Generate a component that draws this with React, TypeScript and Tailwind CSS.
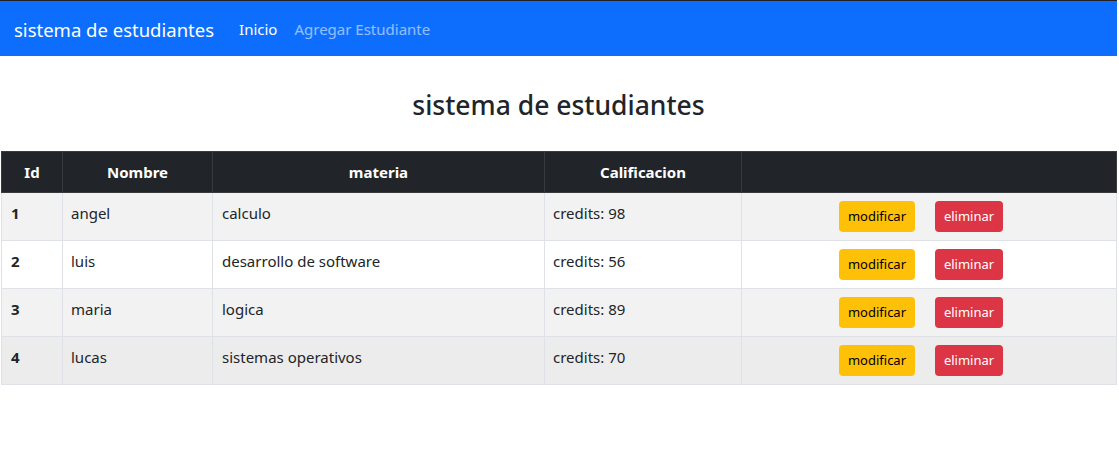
import React from "react";

const rows = [
  { id: 1, nombre: "angel", materia: "calculo", cred: 98 },
  { id: 2, nombre: "luis", materia: "desarrollo de software", cred: 56 },
  { id: 3, nombre: "maria", materia: "logica", cred: 89 },
  { id: 4, nombre: "lucas", materia: "sistemas operativos", cred: 70 },
];

const rowBg = ["bg-[#f2f2f2]", "bg-white", "bg-[#f2f2f2]", "bg-[#ececec]"];

export default function App() {
  return (
    <div
      className="w-[1117px] min-h-[468px] bg-white text-[#212529]"
      style={{ fontFamily: '"Noto Sans", "Open Sans", sans-serif' }}
    >
      <nav className="h-[56px] bg-[#0d6efd] border-t border-[#222] flex items-center pl-[14px] pt-[2px]">
        <span className="text-[18.5px] text-white mr-[25px] leading-[28px]">sistema de estudiantes</span>
        <span className="text-[15px] text-white mr-[17px]">Inicio</span>
        <span className="text-[15px] text-white/55">Agregar Estudiante</span>
      </nav>
      <h2 className="text-[26.5px] font-medium text-center leading-[36px] mt-[31px] mb-[28px] text-[#212529]">
        sistema de estudiantes
      </h2>
      <table className="ml-[1px] w-[1116px] border-collapse text-[15px]">
        <thead>
          <tr className="bg-[#212529] text-white h-[41px]">
            <th className="w-[61px] border border-[#373b3e] font-bold">Id</th>
            <th className="w-[150px] border border-[#373b3e] font-bold">Nombre</th>
            <th className="w-[332px] border border-[#373b3e] font-bold">materia</th>
            <th className="w-[197px] border border-[#373b3e] font-bold">Calificacion</th>
            <th className="border border-[#373b3e]"></th>
          </tr>
        </thead>
        <tbody>
          {rows.map((r, i) => (
            <tr key={r.id} className={`${rowBg[i]} h-[48px]`}>
              <td className="border border-[#dee2e6] px-[9px] align-top pt-[9px] font-bold">{r.id}</td>
              <td className="border border-[#dee2e6] px-[8px] align-top pt-[9px]">{r.nombre}</td>
              <td className="border border-[#dee2e6] px-[9px] align-top pt-[9px]">{r.materia}</td>
              <td className="border border-[#dee2e6] px-[8px] align-top pt-[9px]">credits: {r.cred}</td>
              <td className="border border-[#dee2e6] align-top pt-[8px]">
                <div className="flex justify-center gap-[20px] pr-[16px]">
                  <button className="h-[31px] w-[76px] rounded-[4px] bg-[#ffc107] text-[13px] text-black">
                    modificar
                  </button>
                  <button className="h-[31px] w-[68px] rounded-[4px] bg-[#dc3545] text-[13px] text-white">
                    eliminar
                  </button>
                </div>
              </td>
            </tr>
          ))}
        </tbody>
      </table>
    </div>
  );
}
